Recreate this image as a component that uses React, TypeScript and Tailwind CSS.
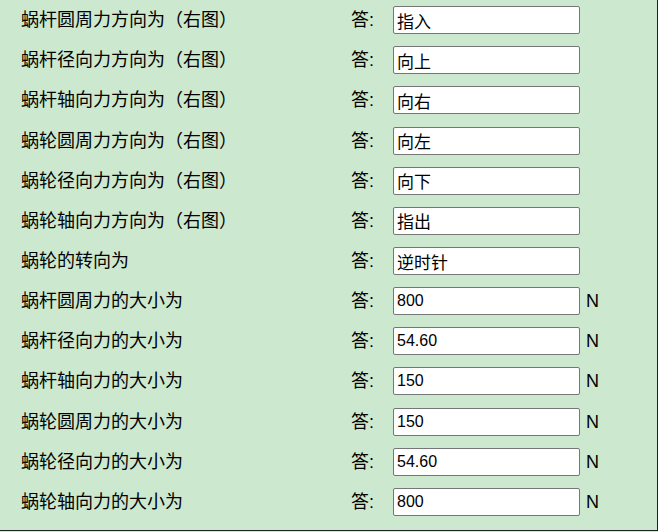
import React from "react";

const rows: { label: string; value: string; unit?: boolean }[] = [
  { label: "蜗杆圆周力方向为（右图）", value: "指入" },
  { label: "蜗杆径向力方向为（右图）", value: "向上" },
  { label: "蜗杆轴向力方向为（右图）", value: "向右" },
  { label: "蜗轮圆周力方向为（右图）", value: "向左" },
  { label: "蜗轮径向力方向为（右图）", value: "向下" },
  { label: "蜗轮轴向力方向为（右图）", value: "指出" },
  { label: "蜗轮的转向为", value: "逆时针" },
  { label: "蜗杆圆周力的大小为", value: "800", unit: true },
  { label: "蜗杆径向力的大小为", value: "54.60", unit: true },
  { label: "蜗杆轴向力的大小为", value: "150", unit: true },
  { label: "蜗轮圆周力的大小为", value: "150", unit: true },
  { label: "蜗轮径向力的大小为", value: "54.60", unit: true },
  { label: "蜗轮轴向力的大小为", value: "800", unit: true },
];

export default function App() {
  return (
    <div className="min-h-screen bg-[#cce8cf]">
      <div
        className="w-[658px] h-[531px] border-r border-b border-[#222] bg-[#cce8cf] text-black"
        style={{ fontFamily: '"Liberation Sans", "Noto Sans CJK SC", sans-serif' }}
      >
        {rows.map((r, i) => (
          <div key={i} className="flex items-center h-[40.17px] pl-[21px]">
            <div className="w-[330px] text-[18px] leading-[42px] whitespace-nowrap">{r.label}</div>
            <div className="w-[42px] text-[18px] leading-[42px] whitespace-nowrap">答:</div>
            <input
              readOnly
              value={r.value}
              className={`w-[187px] h-[28px] border border-[#767676] rounded-[2px] bg-white px-[3px] text-black outline-none ${r.unit ? "text-[16px]" : "text-[17px]"}`}
              style={{ fontFamily: '"Liberation Sans", "Noto Sans CJK SC", sans-serif' }}
            />
            {r.unit && <div className="ml-[6px] text-[18px] leading-[40px]">N</div>}
          </div>
        ))}
      </div>
    </div>
  );
}
